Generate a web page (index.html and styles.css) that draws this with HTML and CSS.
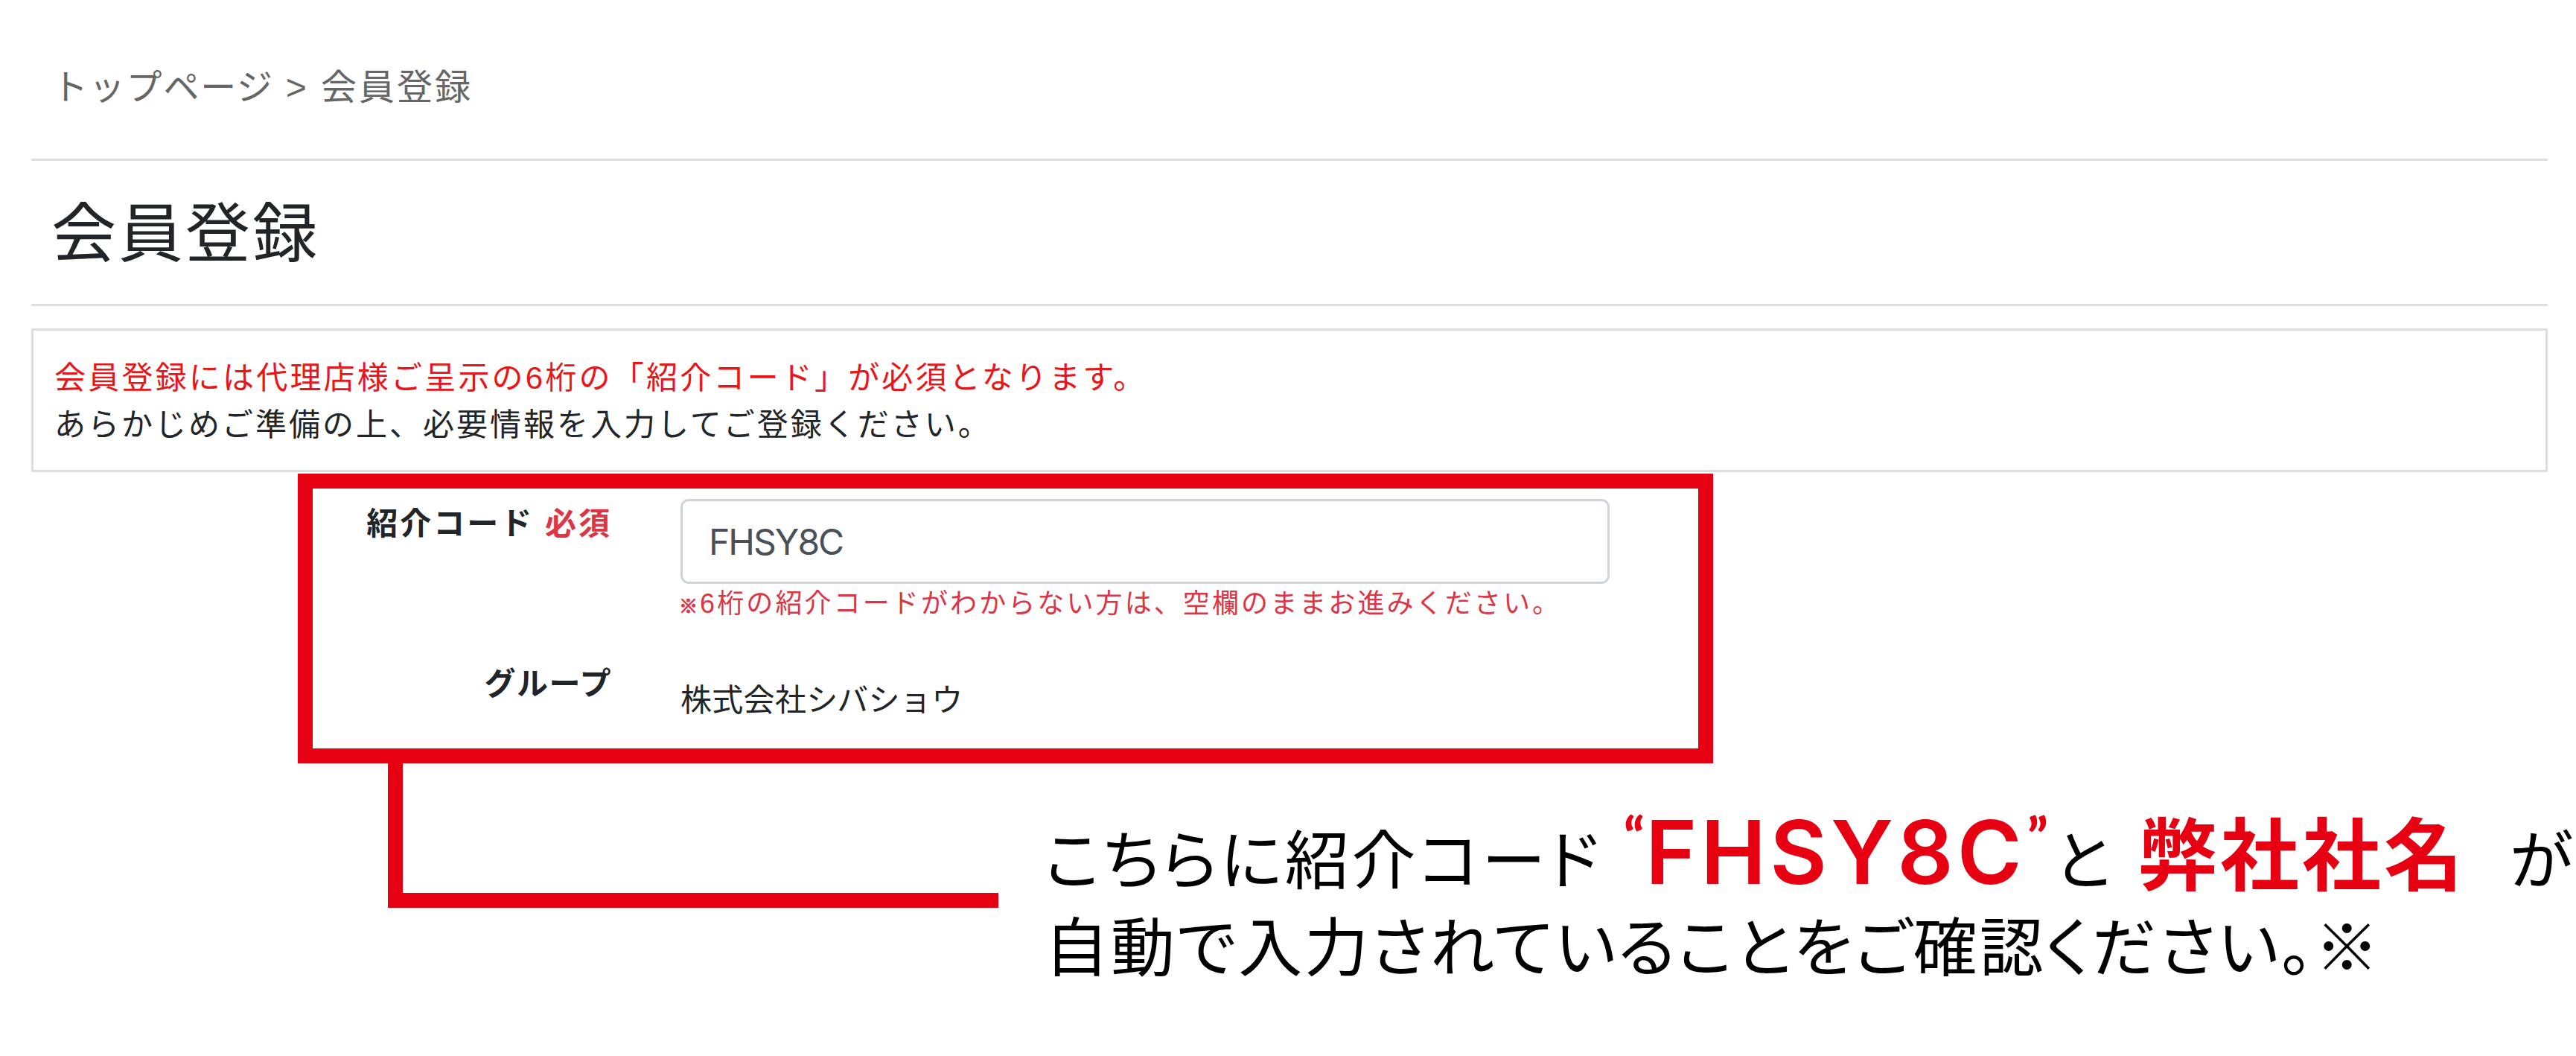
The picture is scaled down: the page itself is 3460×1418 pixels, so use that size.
FILE: index.html
```html
<!DOCTYPE html>
<html lang="ja">
<head>
    <meta charset="utf-8">
    <title>会員登録</title>
    <link rel="stylesheet" href="styles.css">
</head>
<body>
    <div class="container">
        <nav class="breadcrumb"><span class="crumb-top">トップページ</span><span class="crumb-sep">&gt;</span><span>会員登録</span></nav>
        <h1 class="page-title">会員登録</h1>
        <div class="notice">
            <p class="notice-red">会員登録には代理店様ご呈示の6桁の「紹介コード」が必須となります。</p>
            <p>あらかじめご準備の上、必要情報を入力してご登録ください。</p>
        </div>
    </div>

    <form class="form-box">
        <div class="form-row">
            <label class="form-label" for="code">紹介コード <span class="required">必須</span></label>
            <div class="form-field">
                <input class="form-control" id="code" type="text" value="FHSY8C">
                <p class="form-help"><span class="mark">※</span>6桁の紹介コードがわからない方は、空欄のままお進みください。</p>
            </div>
        </div>
        <div class="form-row">
            <div class="form-label group-label">グループ</div>
            <div class="form-field group-name">株式会社シバショウ</div>
        </div>
    </form>

    <div class="callout">
        <div class="callout-line"></div>
        <div class="callout-text">
            <p class="callout-first">
                <span class="lead">こちらに紹介コード</span>
                <span class="quote quote-open">“</span>
                <strong class="code">FHSY8C</strong>
                <span class="quote quote-close">”</span>
                <span class="to">と</span>
                <strong class="company">弊社社名</strong>
                <span class="ga">が</span>
            </p>
            <p class="callout-second">自動で入力されていることをご確認ください。※</p>
        </div>
    </div>
</body>
</html>
```
FILE: styles.css
```css
* {
    box-sizing: border-box;
}

body {
    margin: 0;
    background: #fff;
    color: #212529;
    font-family: "Liberation Sans", "Noto Sans CJK JP", sans-serif;
    font-size: 42px;
    line-height: 1.5;
    letter-spacing: 3px;
    overflow: hidden;
}

p {
    margin: 0;
}

.container {
    margin: 0 38px 0 42px;
}

.breadcrumb {
    display: flex;
    height: 213px;
    padding: 82px 0 0 28px;
    color: #666;
    font-size: 48px;
}

.crumb-top {
    letter-spacing: 1.8px;
}

.crumb-sep {
    margin: 0 16px;
}

.page-title {
    height: 198px;
    margin: 0 0 30px;
    padding-left: 27px;
    border-top: 3px solid #ddd;
    border-bottom: 3px solid #ddd;
    font-size: 87px;
    font-weight: normal;
    line-height: 198px;
}

.notice {
    height: 193px;
    padding: 32px 28px 0;
    border: 3px solid #ddd;
}

.notice-red {
    color: #ea1518;
    letter-spacing: 3.2px;
}

.form-box {
    width: 1901px;
    height: 389px;
    margin: 2px 0 0 400px;
    padding-top: 14px;
    border: 20px solid #e60012;
}

.form-row {
    display: flex;
    gap: 92px;
}

.form-label {
    width: 402px;
    padding-top: 2px;
    font-weight: bold;
    text-align: right;
    white-space: nowrap;
}

.required {
    color: #dc3545;
}

.form-control {
    display: block;
    width: 1248px;
    height: 114px;
    padding: 0 35px;
    border: 3px solid #ced4da;
    border-radius: 11px;
    background: #fff;
    color: #495057;
    font: 48px Inter, sans-serif;
    letter-spacing: -2px;
}

.form-help {
    height: 96px;
    color: #dc3545;
    font-size: 36px;
    letter-spacing: 3.1px;
    white-space: nowrap;
}

.mark {
    margin-left: -2px;
    font-size: 25px;
    -webkit-text-stroke: 1.2px #dc3545;
}

.group-label {
    padding-top: 7px;
    letter-spacing: 1.5px;
}

.group-name {
    padding-top: 29px;
    letter-spacing: 0.3px;
}

.callout {
    display: flex;
    gap: 62px;
    margin-left: 521px;
    color: #000;
    font-family: "Noto Sans CJK JP", sans-serif;
    white-space: nowrap;
}

/* L字の引き出し線 */
.callout-line {
    flex: none;
    width: 820px;
    height: 194px;
    border: solid #e60012;
    border-width: 0 0 20px 20px;
}

.callout-text {
    padding-top: 58px;
    font-size: 86px;
    line-height: 116px;
    letter-spacing: 2.9px;
    font-feature-settings: "palt";
}

.callout-first {
    display: flex;
    align-items: baseline;
    height: 126px;
}

.callout-first strong,
.quote {
    color: #e60012;
}

.lead {
    width: 778px;
    letter-spacing: 3.8px;
}

.quote {
    align-self: flex-start;
    width: 29px;
    font-family: Lato, sans-serif;
    font-size: 70px;
    font-weight: 900;
    line-height: 78px;
    letter-spacing: 0;
}

.quote-close {
    width: 36px;
}

.code {
    width: 513px;
    font-family: Inter, sans-serif;
    font-size: 118px;
    font-weight: 600;
    letter-spacing: 5px;
}

.to {
    width: 113px;
}

.company {
    width: 499px;
    font-size: 106px;
    letter-spacing: 4px;
}
```
